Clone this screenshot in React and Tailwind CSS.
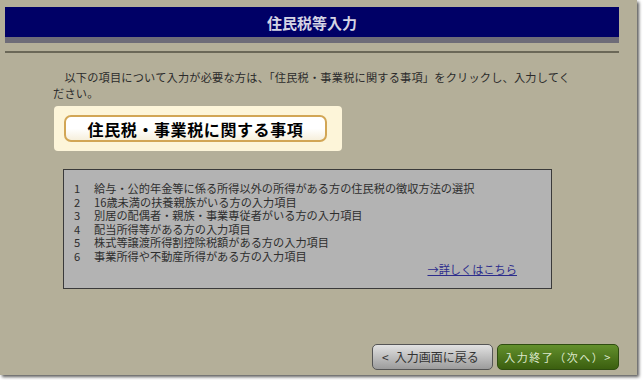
import React from 'react';

const jp = { fontFamily: '"Noto Sans CJK JP", "Liberation Sans", sans-serif' };

const items = [
  '給与・公的年金等に係る所得以外の所得がある方の住民税の徴収方法の選択',
  '16歳未満の扶養親族がいる方の入力項目',
  '別居の配偶者・親族・事業専従者がいる方の入力項目',
  '配当所得等がある方の入力項目',
  '株式等譲渡所得割控除税額がある方の入力項目',
  '事業所得や不動産所得がある方の入力項目',
];

const App = () => {
  return (
    <div className="w-[644px] h-[380px] bg-white overflow-hidden" style={jp}>
      <div className="w-[637px] h-[375px] bg-[#b4af99] shadow-[2px_2px_3px_rgba(0,0,0,0.65)] pt-[7px] pl-[5px] flex flex-col">
        {/* title bar */}
        <div className="w-[614px] h-[30px] bg-[#000066] flex items-center justify-center text-[15px] font-bold text-[#d4d4e4] leading-none">
          住民税等入力
        </div>
        <div className="w-[614px] h-[6px] bg-[#6e6c78]" />
        <div className="w-[614px] h-[2px] mt-[8px] bg-[#6b6858]" />

        <p className="mt-[16px] ml-[48px] text-[11.2px] leading-[16px] tracking-[0.2px] text-[#2b2b2b] whitespace-pre">
          {'\u3000以下の項目について入力が必要な方は、「住民税・事業税に関する事項」をクリックし、入力してく'}
          <br />
          {'ださい。'}
        </p>

        {/* main button */}
        <div className="mt-[5px] ml-[49px] w-[288px] h-[45px] rounded-[4px] bg-[#fdf5d9] pt-[9px] pl-[10px]">
          <div className="w-[263px] h-[27px] rounded-[7px] border-2 border-[#d2a655] bg-gradient-to-b from-white via-white to-[#f6efdc] flex items-center justify-center text-[16px] tracking-[0.6px] font-bold text-black leading-none">
            住民税・事業税に関する事項
          </div>
        </div>

        {/* info box */}
        <div className="mt-[18px] ml-[58px] w-[489px] h-[120px] bg-[#b3b3b3] border border-[#3a3a3a] pt-[12px] pl-[10px] pr-[34px] text-[11.2px] leading-[13.5px] text-[#2e2e2e]">
          {items.map((t, i) => (
            <div key={i} className="flex">
              <span className="w-[20px]">{i + 1}</span>
              <span>{t}</span>
            </div>
          ))}
          <div className="flex justify-end">
            <span className="text-[#2c2c8c] underline">→詳しくはこちら</span>
          </div>
        </div>

        {/* footer buttons */}
        <div className="mt-[55px] w-[614px] flex justify-end gap-[4px]">
          <div className="w-[121px] h-[26px] rounded-[5px] border border-[#555] bg-gradient-to-b from-[#e2e2e2] to-[#9c9c9c] flex items-center pl-[9px] text-[12px] text-[#333] leading-none">
            <span className="mr-[6px]">&lt;</span>
            <span>入力画面に戻る</span>
          </div>
          <div className="w-[122px] h-[26px] rounded-[5px] border border-[#2f4d10] bg-gradient-to-b from-[#63902c] to-[#3b5f0f] flex items-center justify-center text-[11px] tracking-[1.5px] text-[#dde8cc] leading-none">
            入力終了（次へ）&gt;
          </div>
        </div>
      </div>
    </div>
  );
};

export default App;
